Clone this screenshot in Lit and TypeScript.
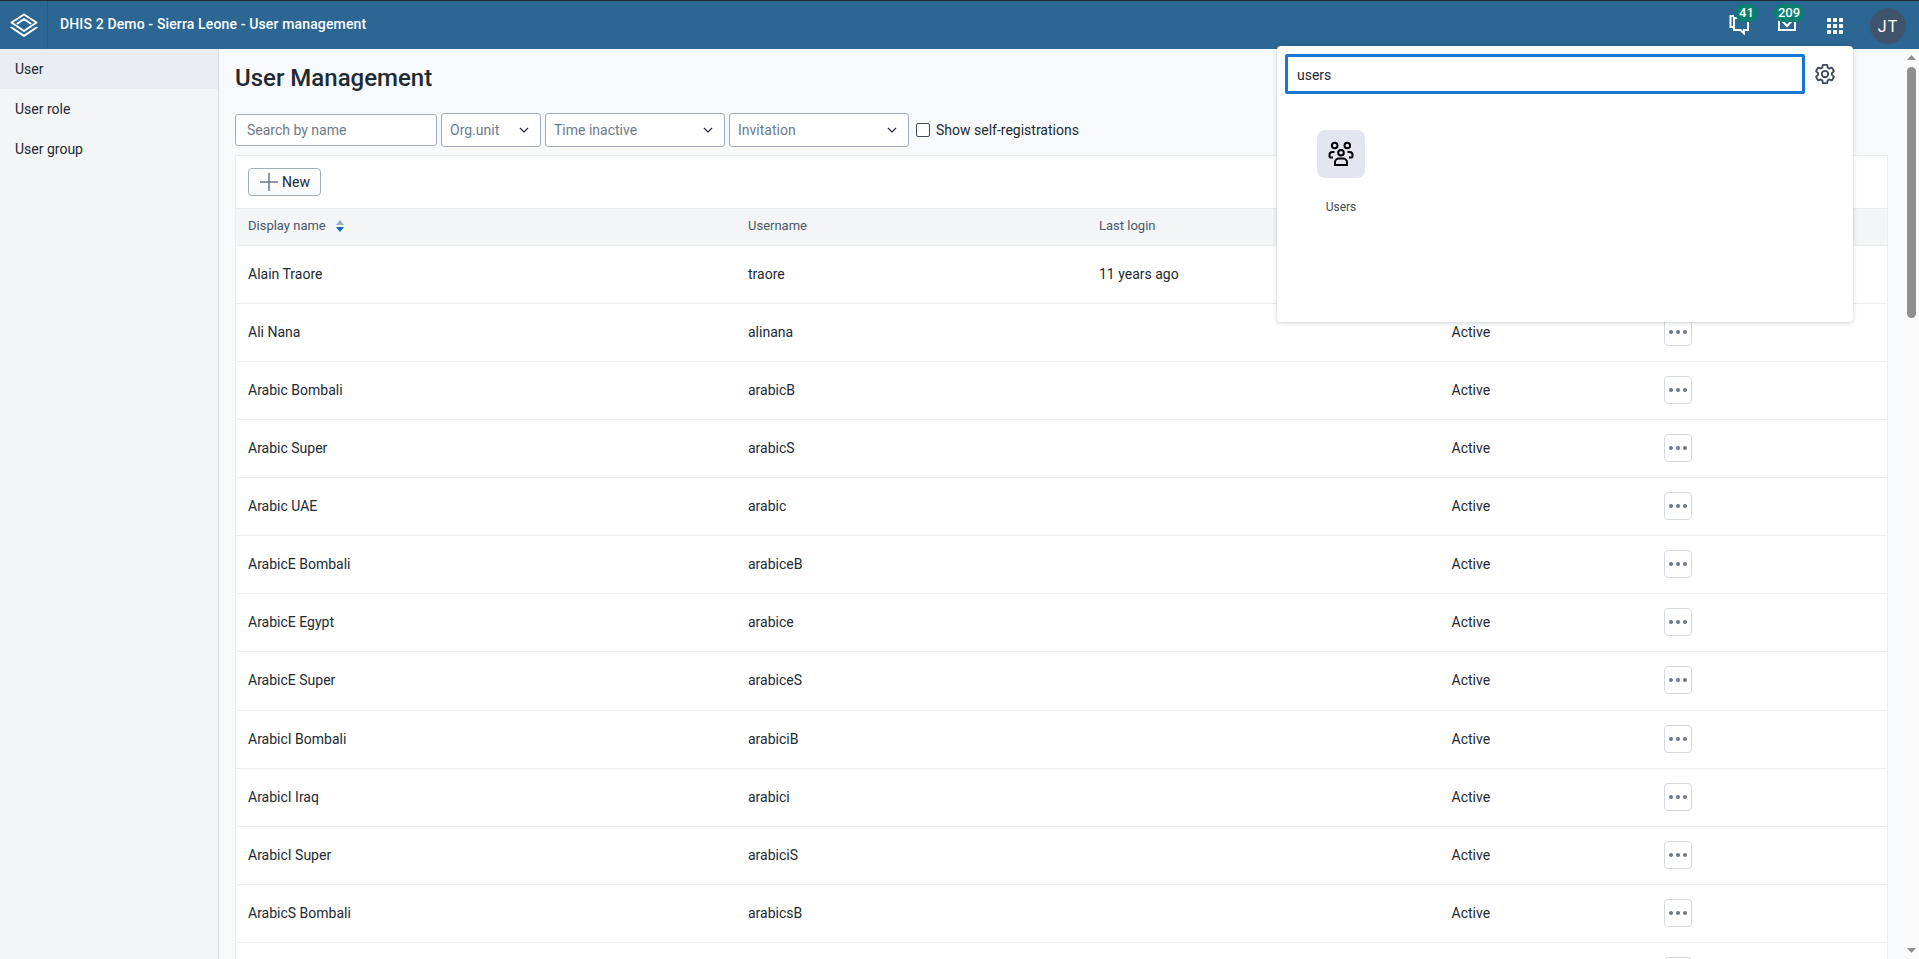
import { LitElement, html, css, svg } from "lit";
import { customElement } from "lit/decorators.js";

const ROWS: [string, string, string, string][] = [
  ["Alain Traore", "traore", "11 years ago", "Active"],
  ["Ali Nana", "alinana", "", "Active"],
  ["Arabic Bombali", "arabicB", "", "Active"],
  ["Arabic Super", "arabicS", "", "Active"],
  ["Arabic UAE", "arabic", "", "Active"],
  ["ArabicE Bombali", "arabiceB", "", "Active"],
  ["ArabicE Egypt", "arabice", "", "Active"],
  ["ArabicE Super", "arabiceS", "", "Active"],
  ["ArabicI Bombali", "arabiciB", "", "Active"],
  ["ArabicI Iraq", "arabici", "", "Active"],
  ["ArabicI Super", "arabiciS", "", "Active"],
  ["ArabicS Bombali", "arabicsB", "", "Active"],
  ["", "", "", ""],
];

const chevron = html`<svg class="chev" width="10" height="6" viewBox="0 0 10 6"><path d="M1 1l4 4 4-4" fill="none" stroke="#212934" stroke-width="1.2"/></svg>`;

@customElement("app-root")
export class AppRoot extends LitElement {
  static styles = css`
    :host {
      display: flex;
      flex-direction: column;
      height: 100vh;
      overflow: hidden;
      position: relative;
      font-family: Roboto, "Liberation Sans", sans-serif;
      font-size: 14px;
      color: #212934;
      background: #f8f9fa;
    }
    .header {
      flex: none;
      height: 48px;
      border-top: 1px solid #1b2a36;
      background: #2c6693;
      display: flex;
      align-items: center;
      color: #fff;
    }
    .logo {
      width: 47px;
      height: 48px;
      border-right: 1px solid #245a84;
      display: flex;
      align-items: center;
      justify-content: center;
      flex: none;
    }
    .title {
      margin-left: 12px;
      font-weight: 500;
      font-size: 14px;
      letter-spacing: 0.14px;
      flex: 1;
      position: relative;
      top: -1px;
    }
    .hicons {
      position: relative;
      width: 200px;
      height: 48px;
      flex: none;
      display: flex;
      align-items: center;
    }
    .hi {
      position: relative;
      display: flex;
    }
    .hi.chat { margin-left: 10px; margin-top: -2px; }
    .hi.mail { margin-left: 26px; margin-top: -4px; }
    .hi.apps { margin-left: 30px; margin-top: 2px; }
    .badge {
      position: absolute;
      box-sizing: border-box;
      background: #07806f;
      color: #fff;
      font-size: 13px;
      font-weight: 500;
      height: 18px;
      line-height: 18px;
      border-radius: 9px;
      text-align: center;
    }
    .b1 { left: 6px; top: -9px; width: 23px; }
    .b2 { left: -3px; top: -9px; width: 30px; }
    .avatar {
      position: absolute;
      left: 151px;
      top: 7px;
      width: 36px;
      height: 36px;
      border-radius: 50%;
      background: #3f546c;
      color: #fff;
      font-size: 16px;
      display: flex;
      align-items: center;
      justify-content: center;
      letter-spacing: 1px;
    }
    .body {
      flex: 1;
      display: flex;
      min-height: 0;
    }
    .side {
      width: 218px;
      flex: none;
      background: #f3f5f7;
      border-right: 1px solid #d5dde5;
    }
    .side div {
      height: 40px;
      line-height: 40px;
      padding-left: 15px;
    }
    .side .sel { background: #e8edf2; }
    .main {
      flex: 1;
      min-width: 0;
      padding-left: 16px;
      padding-right: 31px;
    }
    h1 {
      margin: 0;
      font-size: 24px;
      font-weight: 500;
      line-height: 28px;
      padding-top: 15px;
      box-sizing: border-box;
      height: 64px;
    }
    .filters {
      display: flex;
      align-items: center;
      gap: 4px;
      height: 34px;
    }
    .input, .select {
      box-sizing: border-box;
      background: #fff;
      border: 1px solid #a0adba;
      border-radius: 3px;
      color: #6e7a8a;
      display: flex;
      align-items: center;
    }
    .input { width: 202px; height: 32px; padding-left: 11px; }
    .select { height: 34px; padding: 0 11px 1px 8px; justify-content: space-between; }
    .s1 { width: 100px; }
    .s2, .s3 { width: 180px; }
    .chev { flex: none; }
    .check {
      display: flex;
      align-items: center;
      gap: 6px;
      margin-left: 3px;
    }
    .box {
      box-sizing: border-box;
      width: 14px;
      height: 14px;
      border: 1px solid #404b5a;
      border-radius: 2px;
      background: #fff;
    }
    .card {
      margin-top: 8px;
      background: #fff;
      border: 1px solid #e8edf2;
      border-bottom: 0;
    }
    .toolbar {
      height: 52px;
      padding-left: 12px;
      display: flex;
      align-items: center;
    }
    .btn {
      box-sizing: border-box;
      height: 28px;
      width: 73px;
      border: 1px solid #a0adba;
      border-radius: 4px;
      background: linear-gradient(#fff, #f8f9fa);
      display: flex;
      align-items: center;
      padding-left: 11px;
      gap: 4px;
    }
    .row {
      display: grid;
      grid-template-columns: 500px 351px 352.5px 212.5px 1fr;
      align-items: center;
      height: 58.07px;
      padding-bottom: 1px;
      box-sizing: border-box;
      border-bottom: 1px solid #e8edf2;
    }
    .row > span { padding-left: 12px; }
    .row.head {
      height: 38px;
      padding-bottom: 3px;
      background: #f3f5f7;
      border-top: 1px solid #e8edf2;
      font-size: 13px;
      color: #4a5768;
    }
    .sorted { display: flex; align-items: center; gap: 10px; }
    .more {
      margin-left: 12px;
      box-sizing: border-box;
      width: 28px;
      height: 28px;
      border: 1px solid #d5dae0;
      border-radius: 4px;
      background: #fff;
      display: flex;
      align-items: center;
      justify-content: center;
    }
    .popup {
      position: absolute;
      left: 1277px;
      top: 46px;
      width: 576px;
      height: 276px;
      box-sizing: border-box;
      background: #fff;
      border-radius: 4px;
      box-shadow: 0 1px 4px rgba(33, 41, 52, 0.22);
      padding: 8px;
    }
    .search {
      display: flex;
      align-items: center;
    }
    .sinput {
      box-sizing: border-box;
      width: 520px;
      height: 40px;
      border: 3px solid #1976d2;
      border-radius: 2px;
      padding: 2px 0 0 9px;
      display: flex;
      align-items: center;
      color: #212934;
      font-size: 14px;
    }
    .gear { margin-left: 9px; display: flex; }
    .tile-wrap {
      width: 128px;
      margin-top: 36px;
      display: flex;
      flex-direction: column;
      align-items: center;
      margin-left: -8px;
    }
    .tile {
      width: 48px;
      height: 48px;
      border-radius: 8px;
      background: #e3e6ef;
      display: flex;
      align-items: center;
      justify-content: center;
    }
    .tile-label {
      margin-top: 22px;
      font-size: 12px;
      color: #404b5a;
    }
    .sb {
      position: absolute;
      right: 0;
      top: 49px;
      bottom: 0;
      width: 15px;
      background: #fafafa;
    }
    .thumb {
      position: absolute;
      left: 3px;
      top: 18px;
      width: 9px;
      height: 251px;
      border-radius: 5px;
      background: #8f8f8f;
    }
    .arrow { position: absolute; left: 3px; }
    .up { top: 6px; }
    .down { bottom: 6px; }
  `;

  render() {
    return html`
      <div class="header">
        <div class="logo">
          <svg width="28" height="24" viewBox="0 0 28 24" fill="none" stroke="#fff" stroke-width="2" stroke-linejoin="round" stroke-linecap="round">
            <path d="M14 1.500L26.500 9.500 14 18 1.500 9.500z"/>
            <path d="M7.500 10.500L14 6l6.500 4.500"/>
            <path d="M1.500 14.500L14 22.800l12.500-8.300"/>
          </svg>
        </div>
        <div class="title">DHIS 2 Demo - Sierra Leone - User management</div>
        <div class="hicons">
          <div class="hi chat">
            <svg width="22" height="22" viewBox="0 0 22 22" fill="none" stroke="#fff" stroke-width="2">
              <path d="M5 3H1.500v11H5"/>
              <path d="M5 16.500V5h14v12h-4v3.500L11.500 17H5z"/>
            </svg>
            <span class="badge b1">41</span>
          </div>
          <div class="hi mail">
            <svg width="20" height="20" viewBox="0 0 20 20" fill="none" stroke="#fff" stroke-width="2">
              <path d="M2 4h16v13H2z"/>
              <path d="M2.500 5l7.500 8 7.500-8"/>
            </svg>
            <span class="badge b2">209</span>
          </div>
          <div class="hi apps">
            <svg width="16" height="16" viewBox="0 0 16 16" fill="#fff">
              ${[0, 6, 12].flatMap((y) => [0, 6, 12].map((x) => svg`<rect x=${x} y=${y} width="4" height="4" rx=".5"/>`))}
            </svg>
          </div>
          <div class="avatar">JT</div>
        </div>
      </div>
      <div class="body">
        <div class="side">
          <div class="sel">User</div>
          <div>User role</div>
          <div>User group</div>
        </div>
        <div class="main">
          <h1>User Management</h1>
          <div class="filters">
            <div class="input">Search by name</div>
            <div class="select s1"><span>Org.unit</span>${chevron}</div>
            <div class="select s2"><span>Time inactive</span>${chevron}</div>
            <div class="select s3"><span>Invitation</span>${chevron}</div>
            <label class="check"><span class="box"></span>Show self-registrations</label>
          </div>
          <div class="card">
            <div class="toolbar">
              <div class="btn">
                <svg width="18" height="18" viewBox="0 0 18 18"><path d="M9 0v18M0 9h18" stroke="#6c7787" stroke-width="1.500"/></svg>
                <span>New</span>
              </div>
            </div>
            <div class="row head">
              <span class="sorted">Display name
                <svg width="8" height="12" viewBox="0 0 8 12"><path d="M4 0l4 5H0z" fill="#a0adba"/><path d="M4 12L0 7h8z" fill="#1565c0"/></svg>
              </span>
              <span>Username</span>
              <span>Last login</span>
              <span>Status</span>
              <span></span>
            </div>
            ${ROWS.map(
              (r) => html`<div class="row">
                <span>${r[0]}</span>
                <span>${r[1]}</span>
                <span>${r[2]}</span>
                <span>${r[3]}</span>
                <div class="more">
                  <svg width="18" height="4" viewBox="0 0 18 4" fill="#6c7787"><circle cx="2" cy="2" r="2"/><circle cx="9" cy="2" r="2"/><circle cx="16" cy="2" r="2"/></svg>
                </div>
              </div>`
            )}
          </div>
        </div>
      </div>
      <div class="popup">
        <div class="search">
          <div class="sinput">users</div>
          <div class="gear">
            <svg width="22" height="24" viewBox="0 0 24 26.180" fill="none" stroke="#404b5a" stroke-width="2" stroke-linejoin="round">
              <g transform="translate(0 1.090)">
                <circle cx="12" cy="12" r="3.500"/>
                <path d="M19.430 12.980c.04-.32.07-.64.07-.98s-.03-.66-.07-.98l2.110-1.650c.19-.15.24-.42.12-.64l-2-3.460c-.12-.22-.39-.3-.61-.22l-2.490 1c-.52-.4-1.080-.73-1.690-.98l-.38-2.650C14.460 2.180 14.250 2 14 2h-4c-.25 0-.46.18-.49.42l-.38 2.650c-.61.25-1.170.59-1.690.98l-2.490-1c-.23-.09-.49 0-.61.22l-2 3.460c-.13.22-.07.49.12.64l2.110 1.650c-.04.32-.07.65-.07.98s.03.66.07.98l-2.110 1.650c-.19.15-.24.42-.12.64l2 3.460c.12.22.39.3.61.22l2.490-1c.52.4 1.080.73 1.690.98l.38 2.650c.03.24.24.42.49.42h4c.25 0 .46-.18.49-.42l.38-2.650c.61-.25 1.170-.59 1.690-.98l2.490 1c.23.09.49 0 .61-.22l2-3.460c.12-.22.07-.49-.12-.64l-2.110-1.650z"/>
              </g>
            </svg>
          </div>
        </div>
        <div class="tile-wrap">
          <div class="tile">
            <svg width="28" height="26" viewBox="0 0 28 26" fill="none" stroke="#000" stroke-width="2">
              <circle cx="7.700" cy="4.500" r="2.800"/>
              <circle cx="20.300" cy="4.500" r="2.800"/>
              <circle cx="14" cy="11.700" r="2.800"/>
              <path d="M6 16.500H3.500A1 1 0 0 1 2.500 15.500v-1.500a3 3 0 0 1 3-3h2"/>
              <path d="M22 16.500h2.500a1 1 0 0 0 1-1v-1.500a3 3 0 0 0-3-3h-2"/>
              <path d="M8 24v-2.500a4 4 0 0 1 4-4h4a4 4 0 0 1 4 4V24z"/>
            </svg>
          </div>
          <div class="tile-label">Users</div>
        </div>
      </div>
      <div class="sb">
        <svg class="arrow up" width="9" height="5" viewBox="0 0 9 5"><path d="M4.500 0L9 5H0z" fill="#8f8f8f"/></svg>
        <div class="thumb"></div>
        <svg class="arrow down" width="9" height="5" viewBox="0 0 9 5"><path d="M4.500 5L0 0h9z" fill="#8f8f8f"/></svg>
      </div>
    `;
  }
}
